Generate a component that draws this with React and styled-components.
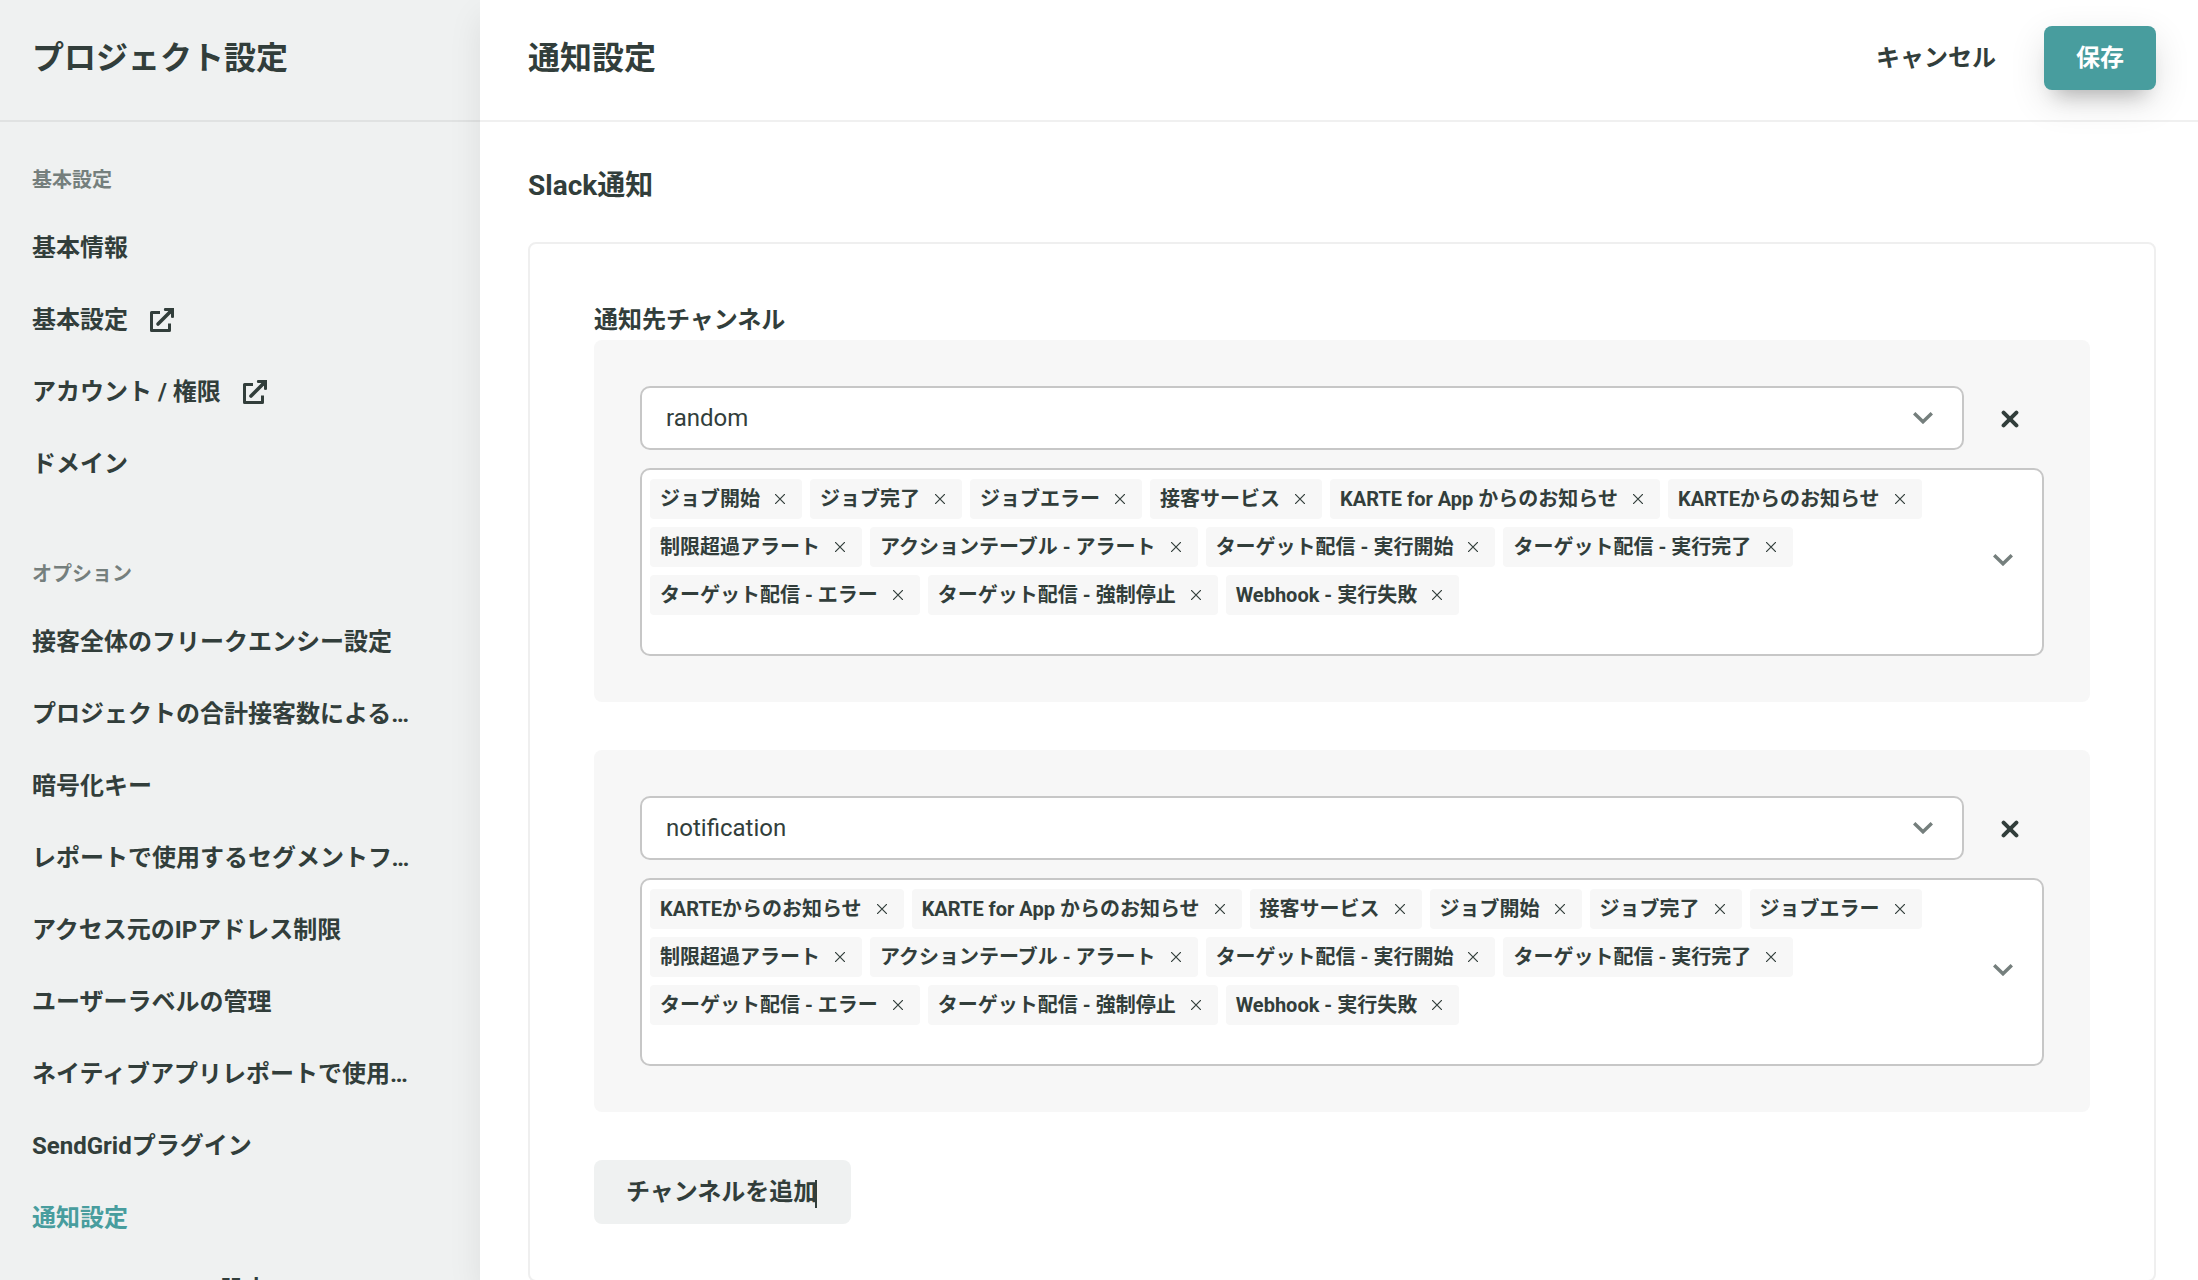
import React, { useState } from "react";
import styled, { createGlobalStyle, css } from "styled-components";

const BASIC_ITEMS = [
  { label: "基本情報" },
  { label: "基本設定", external: true },
  { label: "アカウント / 権限", external: true },
  { label: "ドメイン" },
];

const OPTION_ITEMS = [
  { label: "接客全体のフリークエンシー設定" },
  { label: "プロジェクトの合計接客数による配信制限" },
  { label: "暗号化キー" },
  { label: "レポートで使用するセグメントフィルタ" },
  { label: "アクセス元のIPアドレス制限" },
  { label: "ユーザーラベルの管理" },
  { label: "ネイティブアプリレポートで使用するイベント" },
  { label: "SendGridプラグイン" },
  { label: "通知設定", active: true },
  { label: "Google Analytics 設定" },
];

const COMMON_TAGS = [
  "制限超過アラート",
  "アクションテーブル - アラート",
  "ターゲット配信 - 実行開始",
  "ターゲット配信 - 実行完了",
  "ターゲット配信 - エラー",
  "ターゲット配信 - 強制停止",
  "Webhook - 実行失敗",
];

const INITIAL_CHANNELS = [
  {
    id: 1,
    name: "random",
    tags: [
      "ジョブ開始",
      "ジョブ完了",
      "ジョブエラー",
      "接客サービス",
      "KARTE for App からのお知らせ",
      "KARTEからのお知らせ",
      ...COMMON_TAGS,
    ],
  },
  {
    id: 2,
    name: "notification",
    tags: [
      "KARTEからのお知らせ",
      "KARTE for App からのお知らせ",
      "接客サービス",
      "ジョブ開始",
      "ジョブ完了",
      "ジョブエラー",
      ...COMMON_TAGS,
    ],
  },
];

const ExternalIcon = () => (
  <svg width="24" height="24" viewBox="0 0 24 24" aria-hidden="true">
    <path
      d="M10 4.5H1.5V22.5H19.5V15.5"
      fill="none"
      stroke="currentColor"
      strokeWidth="3"
      strokeLinejoin="round"
    />
    <path
      d="M8 16L20.5 3.5"
      fill="none"
      stroke="currentColor"
      strokeWidth="3.6"
      strokeLinecap="round"
    />
    <path d="M14.5 0H24V9.5L22.5 10L21 9.5V6L18 3H14.5L13.8 1.5Z" fill="currentColor" />
  </svg>
);

const ChevronIcon = () => (
  <svg width="20" height="12" viewBox="0 0 20 12" aria-hidden="true">
    <path d="M1.2 1.2L10 9.8L18.8 1.2" fill="none" stroke="#757f7d" strokeWidth="3.4" />
  </svg>
);

const CloseIcon = () => (
  <svg width="18" height="18" viewBox="0 0 18 18" aria-hidden="true">
    <path
      d="M2.6 2.6L15.4 15.4M15.4 2.6L2.6 15.4"
      stroke="currentColor"
      strokeWidth="4"
      strokeLinecap="round"
    />
  </svg>
);

const SmallCloseIcon = () => (
  <svg width="10" height="10" viewBox="0 0 10 10" aria-hidden="true">
    <path d="M0 0L10 10M10 0L0 10" stroke="currentColor" strokeWidth="1.2" />
  </svg>
);

const NavSection = ({ title, items }) => (
  <NavGroup>
    <NavTitle>{title}</NavTitle>
    <NavList>
      {items.map((item) => (
        <li key={item.label}>
          <NavLink
            href="#"
            $active={item.active}
            aria-current={item.active ? "page" : undefined}
          >
            <span>{item.label}</span>
            {item.external && <ExternalIcon />}
          </NavLink>
        </li>
      ))}
    </NavList>
  </NavGroup>
);

const ChannelCard = ({ channel, onNameChange, onRemove, onRemoveTag }) => (
  <ChannelPanel>
    <ChannelRow>
      <SelectWrapper>
        <Select
          aria-label="通知先チャンネル"
          value={channel.name}
          onChange={(e) => onNameChange(channel.id, e.target.value)}
        >
          <option value="random">random</option>
          <option value="notification">notification</option>
        </Select>
        <SelectArrow>
          <ChevronIcon />
        </SelectArrow>
      </SelectWrapper>
      <RemoveButton
        type="button"
        aria-label="チャンネルを削除"
        onClick={() => onRemove(channel.id)}
      >
        <CloseIcon />
      </RemoveButton>
    </ChannelRow>

    <TagBox>
      <TagList>
        {channel.tags.map((tag) => (
          <Tag key={tag}>
            {tag}
            <TagRemove
              type="button"
              aria-label={`${tag}を削除`}
              onClick={() => onRemoveTag(channel.id, tag)}
            >
              <SmallCloseIcon />
            </TagRemove>
          </Tag>
        ))}
        <TagInput type="text" aria-label="通知の種類" />
      </TagList>
      <TagToggle type="button" aria-label="通知の種類を開く">
        <ChevronIcon />
      </TagToggle>
    </TagBox>
  </ChannelPanel>
);

const App = () => {
  const [channels, setChannels] = useState(INITIAL_CHANNELS);

  const handleNameChange = (id, name) => {
    setChannels(channels.map((c) => (c.id === id ? { ...c, name } : c)));
  };

  const handleRemove = (id) => {
    setChannels(channels.filter((c) => c.id !== id));
  };

  const handleRemoveTag = (id, tag) => {
    setChannels(
      channels.map((c) =>
        c.id === id ? { ...c, tags: c.tags.filter((t) => t !== tag) } : c
      )
    );
  };

  const handleAdd = () => {
    setChannels([...channels, { id: Date.now(), name: "random", tags: [] }]);
  };

  return (
    <>
      <GlobalStyle />
      <Layout>
        <Sidebar>
          <SidebarHeader>
            <Title>プロジェクト設定</Title>
          </SidebarHeader>
          <nav>
            <NavSection title="基本設定" items={BASIC_ITEMS} />
            <NavSection title="オプション" items={OPTION_ITEMS} />
          </nav>
        </Sidebar>

        <Main>
          <MainHeader>
            <Title as="h1">通知設定</Title>
            <Actions>
              <Button type="button" $variant="text">
                キャンセル
              </Button>
              <Button type="button" $variant="primary">
                保存
              </Button>
            </Actions>
          </MainHeader>

          <Content>
            <SectionTitle>Slack通知</SectionTitle>
            <Card>
              <FieldTitle>通知先チャンネル</FieldTitle>
              <ChannelList>
                {channels.map((channel) => (
                  <ChannelCard
                    key={channel.id}
                    channel={channel}
                    onNameChange={handleNameChange}
                    onRemove={handleRemove}
                    onRemoveTag={handleRemoveTag}
                  />
                ))}
              </ChannelList>
              <Button type="button" onClick={handleAdd}>
                チャンネルを追加
                <Caret />
              </Button>
            </Card>
          </Content>
        </Main>
      </Layout>
    </>
  );
};

export default App;

const GlobalStyle = createGlobalStyle`
  * {
    box-sizing: border-box;
  }

  body {
    margin: 0;
    color: #323e3b;
    background: #fff;
    font-family: Roboto, "Noto Sans CJK JP", sans-serif;
    font-size: 24px;
  }

  button,
  input,
  select {
    font-family: inherit;
    color: inherit;
  }

  svg {
    display: block;
    flex-shrink: 0;
  }
`;

const Layout = styled.div`
  display: flex;
  height: 100vh;
  overflow: hidden;
`;

const Sidebar = styled.aside`
  width: 480px;
  flex-shrink: 0;
  overflow: hidden;
  background: #eff1f1;
`;

const headerStyle = css`
  display: flex;
  align-items: center;
  height: 122px;
  padding-bottom: 4px;
  border-bottom: 2px solid rgba(0, 0, 0, 0.06);
`;

const SidebarHeader = styled.div`
  ${headerStyle}
  padding-left: 32px;
`;

const Title = styled.h2`
  margin: 0;
  font-size: 32px;
  font-weight: 700;
  line-height: 48px;
`;

const NavGroup = styled.section`
  padding: 42px 64px 16px 32px;
`;

const NavTitle = styled.h3`
  margin: 0;
  color: #757f7d;
  font-size: 20px;
  font-weight: 700;
  line-height: 32px;
`;

const NavList = styled.ul`
  margin: 16px 0 0;
  padding: 0;
  list-style: none;
`;

const NavLink = styled.a`
  display: flex;
  align-items: center;
  gap: 22px;
  height: 72px;
  color: ${({ $active }) => ($active ? "#489d9e" : "#323e3b")};
  font-weight: 700;
  text-decoration: none;

  & > span {
    line-height: 40px;
    overflow: hidden;
    text-overflow: ellipsis;
    white-space: nowrap;
  }
`;

const Main = styled.main`
  position: relative;
  flex: 1;
  min-width: 0;
  overflow: hidden;
  background: #fff;
  box-shadow: 0 16px 32px rgba(0, 0, 0, 0.08);
`;

const MainHeader = styled.header`
  ${headerStyle}
  justify-content: space-between;
  padding-left: 48px;
  padding-right: 42px;
`;

const Actions = styled.div`
  display: flex;
  gap: 24px;
`;

const buttonVariants = {
  text: css`
    padding: 0 24px;
    background: transparent;
  `,
  primary: css`
    color: #fff;
    background: #489d9e;
    box-shadow: 0 16px 20px -12px rgba(0, 0, 0, 0.24),
      0 12px 36px rgba(0, 0, 0, 0.12);
  `,
};

const Button = styled.button`
  height: 64px;
  padding: 0 32px;
  border: none;
  border-radius: 8px;
  background: #eff1f1;
  font-size: 24px;
  font-weight: 700;
  line-height: 40px;
  cursor: pointer;
  ${({ $variant }) => buttonVariants[$variant]}
`;

const Caret = styled.span`
  display: inline-block;
  width: 2px;
  height: 28px;
  margin: 0 2px 0 -2px;
  vertical-align: middle;
  background: #323e3b;
`;

const Content = styled.div`
  padding: 40px 42px 48px 48px;
`;

const SectionTitle = styled.h2`
  margin: 0 0 32px;
  font-size: 28px;
  font-weight: 700;
  line-height: 48px;
`;

const Card = styled.section`
  padding: 56px 64px;
  border: 2px solid #efefef;
  border-radius: 8px;
`;

const FieldTitle = styled.h3`
  margin: 0;
  font-size: 24px;
  font-weight: 700;
  line-height: 40px;
`;

const ChannelList = styled.div`
  display: flex;
  flex-direction: column;
  gap: 48px;
  margin-bottom: 48px;
`;

const ChannelPanel = styled.div`
  padding: 46px;
  border-radius: 8px;
  background: #f7f7f7;
`;

const ChannelRow = styled.div`
  display: flex;
  align-items: center;
  gap: 24px;
  margin-bottom: 18px;
  padding-right: 12px;
`;

const SelectWrapper = styled.div`
  position: relative;
  flex: 1;
`;

const Select = styled.select`
  display: block;
  width: 100%;
  height: 64px;
  padding: 0 64px 0 24px;
  border: 2px solid #c7c7c7;
  border-radius: 10px;
  background: #fff;
  font-size: 24px;
  appearance: none;
`;

const SelectArrow = styled.span`
  position: absolute;
  top: 26px;
  right: 31px;
  pointer-events: none;
`;

const RemoveButton = styled.button`
  display: flex;
  align-items: center;
  justify-content: center;
  width: 44px;
  height: 44px;
  padding: 2px 0 0;
  border: none;
  background: transparent;
  cursor: pointer;
`;

const TagBox = styled.div`
  display: flex;
  align-items: center;
  border: 2px solid #c7c7c7;
  border-radius: 10px;
  background: #fff;
`;

const TagList = styled.div`
  display: flex;
  flex: 1;
  flex-wrap: wrap;
  gap: 8px;
  padding: 9px 8px 7px;
`;

const Tag = styled.span`
  display: flex;
  align-items: center;
  height: 40px;
  padding: 0 2px 0 10px;
  border-radius: 4px;
  background: #f7f7f7;
  font-size: 20px;
  font-weight: 700;
  line-height: 32px;
  white-space: nowrap;
`;

const TagRemove = styled.button`
  display: flex;
  align-items: center;
  justify-content: center;
  width: 40px;
  height: 40px;
  padding: 0;
  border: none;
  background: transparent;
  cursor: pointer;
`;

const TagInput = styled.input`
  flex: 1 0 100%;
  height: 24px;
  padding: 0;
  border: none;
  outline: none;
  background: transparent;
  font-size: 20px;
`;

const TagToggle = styled.button`
  display: flex;
  align-items: center;
  justify-content: center;
  width: 78px;
  height: 64px;
  padding: 0 0 4px;
  border: none;
  background: transparent;
  cursor: pointer;
`;
